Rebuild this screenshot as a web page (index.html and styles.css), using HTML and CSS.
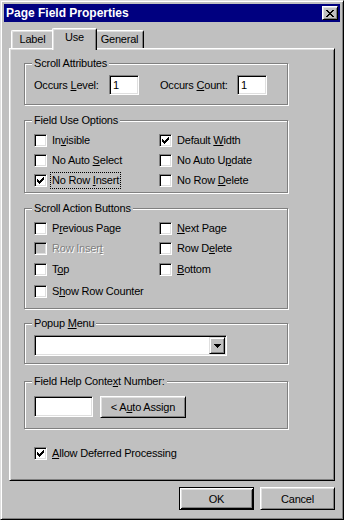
FILE: index.html
```html
<!DOCTYPE html>
<html lang="en">
<head>
    <meta charset="UTF-8">
    <meta name="viewport" content="width=device-width, initial-scale=1.0">
    <title>Page Field Properties</title>
    <link rel="stylesheet" href="styles.css">
</head>
<body>
    <div class="window">
        <!-- Title bar -->
        <div class="title-bar">
            <span class="title-text">Page Field Properties</span>
            <button class="close-btn" aria-label="Close">
                <svg width="8" height="7" viewBox="0 0 8 7" shape-rendering="crispEdges"><path fill="#000" d="M0 0h2v1h-2zM6 0h2v1h-2zM1 1h2v1h-2zM5 1h2v1h-2zM2 2h4v1h-4zM3 3h2v1h-2zM2 4h4v1h-4zM1 5h2v1h-2zM5 5h2v1h-2zM0 6h2v1h-2zM6 6h2v1h-2z"/></svg>
            </button>
        </div>

        <!-- Tabs -->
        <div class="tabs">
            <div class="tab tab-label">Label</div>
            <div class="tab tab-use active">Use</div>
            <div class="tab tab-general">General</div>
        </div>

        <!-- Tab page -->
        <div class="panel">
            <div class="group group-scroll">
                <div class="legend">Scroll Attributes</div>
                <div class="occurs-row">
                    <span class="occurs-label">Occurs <u>L</u>evel:</span>
                    <input class="text-input occurs-input" type="text" value="1" readonly>
                    <span class="occurs-label occurs-count">Occurs <u>C</u>ount:</span>
                    <input class="text-input occurs-input" type="text" value="1" readonly>
                </div>
            </div>

            <div class="group group-use">
                <div class="legend">Field Use Options</div>
                <div class="check-grid">
                    <div class="check-item"><span class="check"></span><span class="check-text">In<u>v</u>isible</span></div>
                    <div class="check-item"><span class="check checked"><svg width="7" height="7" viewBox="0 0 7 7" shape-rendering="crispEdges"><path d="M0 2v3h1v1h1v1h1v-1h1v-1h1v-1h1v-1h1V0h-1v1h-1v1h-1v1h-1v1h-1v-1h-1v-1z"/></svg></span><span class="check-text">Default <u>W</u>idth</span></div>
                    <div class="check-item"><span class="check"></span><span class="check-text">No Auto <u>S</u>elect</span></div>
                    <div class="check-item"><span class="check"></span><span class="check-text">No Auto U<u>p</u>date</span></div>
                    <div class="check-item"><span class="check checked"><svg width="7" height="7" viewBox="0 0 7 7" shape-rendering="crispEdges"><path d="M0 2v3h1v1h1v1h1v-1h1v-1h1v-1h1v-1h1V0h-1v1h-1v1h-1v1h-1v1h-1v-1h-1v-1z"/></svg></span><span class="check-text focus">No Row <u>I</u>nsert</span></div>
                    <div class="check-item"><span class="check"></span><span class="check-text">No Row <u>D</u>elete</span></div>
                </div>
            </div>

            <div class="group group-action">
                <div class="legend">Scroll Action Buttons</div>
                <div class="check-grid action-grid">
                    <div class="check-item"><span class="check"></span><span class="check-text">P<u>r</u>evious Page</span></div>
                    <div class="check-item"><span class="check"></span><span class="check-text"><u>N</u>ext Page</span></div>
                    <div class="check-item disabled"><span class="check"></span><span class="check-text">Row Inser<u>t</u></span></div>
                    <div class="check-item"><span class="check"></span><span class="check-text">Row D<u>e</u>lete</span></div>
                    <div class="check-item"><span class="check"></span><span class="check-text">T<u>o</u>p</span></div>
                    <div class="check-item"><span class="check"></span><span class="check-text"><u>B</u>ottom</span></div>
                    <div class="check-item"><span class="check"></span><span class="check-text">S<u>h</u>ow Row Counter</span></div>
                </div>
            </div>

            <div class="group group-popup">
                <div class="legend">Popup <u>M</u>enu</div>
                <div class="combo">
                    <span class="combo-btn">
                        <svg width="7" height="4" viewBox="0 0 7 4" shape-rendering="crispEdges"><path d="M0 0h7v1h-1v1h-1v1h-1v1h-1v-1h-1v-1h-1v-1h-1z"/></svg>
                    </span>
                </div>
            </div>

            <div class="group group-help">
                <div class="legend">Field Help Conte<u>x</u>t Number:</div>
                <div class="help-row">
                    <input class="text-input help-input" type="text" value="" readonly>
                    <button class="btn btn-assign">&lt; A<u>u</u>to Assign</button>
                </div>
            </div>

            <div class="check-item allow"><span class="check checked"><svg width="7" height="7" viewBox="0 0 7 7" shape-rendering="crispEdges"><path d="M0 2v3h1v1h1v1h1v-1h1v-1h1v-1h1v-1h1V0h-1v1h-1v1h-1v1h-1v1h-1v-1h-1v-1z"/></svg></span><span class="check-text"><u>A</u>llow Deferred Processing</span></div>
        </div>

        <!-- Dialog buttons -->
        <div class="footer">
            <button class="btn btn-default">OK</button>
            <button class="btn">Cancel</button>
        </div>
    </div>
</body>
</html>
```

FILE: styles.css
```css
/* Global */
body {
    margin: 0;
    background: #c0c0c0;
    font-family: "Liberation Sans", Arial, sans-serif;
    font-size: 11px;
    letter-spacing: -0.2px;
    color: #000;
}

u {
    text-decoration-thickness: 1px;
    text-underline-offset: 1px;
}

/* Window frame */
.window {
    box-sizing: border-box;
    width: 344px;
    height: 520px;
    padding: 3px;
    background: #c0c0c0;
    border: 1px solid;
    border-color: #dfdfdf #000 #000 #dfdfdf;
    box-shadow: inset 1px 1px #fff, inset -1px -1px #808080;
}

/* Title bar */
.title-bar {
    height: 18px;
    background: #000080;
    display: flex;
    align-items: center;
    justify-content: space-between;
    padding-left: 2px;
}

.title-text {
    color: #fff;
    font-weight: bold;
    font-size: 12px;
    letter-spacing: 0;
}

.close-btn {
    box-sizing: border-box;
    width: 16px;
    height: 14px;
    margin-right: 2px;
    padding: 0;
    background: #c0c0c0;
    border: 1px solid;
    border-color: #fff #000 #000 #fff;
    box-shadow: inset 1px 1px #dfdfdf, inset -1px -1px #808080;
    display: flex;
    justify-content: center;
    align-items: center;
}

/* Tabs */
.tabs {
    height: 26px;
    display: flex;
    align-items: flex-end;
    padding-left: 2px;
    margin: 0 5px;
}

.tab {
    box-sizing: border-box;
    height: 18px;
    padding-top: 2px;
    line-height: 13px;
    text-align: center;
    background: #c0c0c0;
    border: 1px solid;
    border-bottom: none;
    border-color: #fff #000 #000 #fff;
    border-radius: 2px 2px 0 0;
    box-shadow: inset 1px 1px #dfdfdf, inset -1px 0 #808080;
}

.tab-label { width: 43px; }
.tab-general { width: 49px; }

.tab.active {
    width: 45px;
    height: 22px;
    margin: 0 -2px -2px;
    z-index: 1;
}

/* Tab page */
.panel {
    box-sizing: border-box;
    height: 433px;
    margin: 0 5px;
    padding-top: 14px;
    border: 1px solid;
    border-color: #fff #000 #000 #fff;
    box-shadow: inset 1px 1px #dfdfdf, inset -1px -1px #808080;
}

/* Group boxes */
.group {
    box-sizing: border-box;
    width: 264px;
    margin: 15px 0 0 14px;
    padding-left: 9px;
    border: 1px solid #808080;
    box-shadow: inset 1px 1px #fff, 1px 1px #fff;
}

.group-scroll { margin-top: 0; height: 42px; }
.group-use { height: 73px; }
.group-action { height: 101px; }
.group-popup { margin-top: 14px; height: 41px; }
.group-help { margin-top: 17px; height: 48px; }

.legend {
    display: table;
    margin: -7px 0 0 -2px;
    padding: 0 2px;
    line-height: 13px;
    background: #c0c0c0;
}

/* Occurs row */
.occurs-row {
    display: flex;
    align-items: center;
    margin-top: 5px;
}

.occurs-label { width: 75px; }

.occurs-count {
    width: 77px;
    margin-left: 21px;
}

.text-input {
    box-sizing: border-box;
    height: 21px;
    margin: 0;
    padding: 0 3px;
    font-family: inherit;
    font-size: 11px;
    color: #000;
    background: #fff;
    border: 1px solid;
    border-color: #808080 #fff #fff #808080;
    box-shadow: inset 1px 1px #000, inset -1px -1px #dfdfdf;
    outline: none;
}

.occurs-input {
    width: 30px;
    height: 20px;
}

/* Checkboxes */
.check-grid {
    display: grid;
    grid-template-columns: 125px auto;
    grid-auto-rows: 13px;
    row-gap: 7px;
    margin-top: 7px;
}

.action-grid {
    grid-template-rows: 20px 21px 22px 13px;
    row-gap: 0;
    align-items: start;
}

.check-item {
    display: flex;
    align-items: center;
    height: 13px;
}

.check {
    box-sizing: border-box;
    width: 13px;
    height: 13px;
    flex-shrink: 0;
    background: #fff;
    border: 1px solid;
    border-color: #808080 #fff #fff #808080;
    box-shadow: inset 1px 1px #000, inset -1px -1px #dfdfdf;
    display: flex;
    justify-content: center;
    align-items: center;
}

.check-text {
    margin-left: 4px;
    padding: 0 1px;
    line-height: 15px;
    white-space: nowrap;
}

.check-text.focus {
    outline: 1px dotted #000;
}

.disabled .check {
    background: #c0c0c0;
}

.disabled .check-text {
    color: #808080;
    text-shadow: 1px 1px 0 #fff;
}

.allow {
    margin: 18px 0 0 24px;
}

/* Combo box */
.combo {
    box-sizing: border-box;
    width: 193px;
    height: 21px;
    margin-top: 5px;
    padding: 1px;
    background: #fff;
    border: 1px solid;
    border-color: #808080 #fff #fff #808080;
    box-shadow: inset 1px 1px #000, inset -1px -1px #dfdfdf;
    display: flex;
    justify-content: flex-end;
}

.combo-btn {
    box-sizing: border-box;
    width: 16px;
    height: 17px;
    background: #c0c0c0;
    border: 1px solid;
    border-color: #dfdfdf #000 #000 #dfdfdf;
    box-shadow: inset 1px 1px #fff, inset -1px -1px #808080;
    display: flex;
    justify-content: center;
    align-items: center;
}

/* Help row */
.help-row {
    display: flex;
    align-items: flex-start;
    margin-top: 8px;
}

.help-input { width: 59px; }

/* Buttons */
.btn {
    box-sizing: border-box;
    height: 23px;
    padding: 0;
    font-family: inherit;
    font-size: 11px;
    letter-spacing: -0.2px;
    color: #000;
    background: #c0c0c0;
    border: 1px solid;
    border-color: #fff #000 #000 #fff;
    box-shadow: inset 1px 1px #dfdfdf, inset -1px -1px #808080;
}

.btn-assign {
    width: 86px;
    height: 22px;
    margin-left: 7px;
}

.btn-default {
    border-color: #000;
    box-shadow: inset 1px 1px #fff, inset -1px -1px #000, inset 2px 2px #dfdfdf, inset -2px -2px #808080;
}

/* Footer */
.footer {
    display: flex;
    justify-content: flex-end;
    gap: 6px;
    margin-top: 6px;
    padding-right: 5px;
}

.footer .btn { width: 75px; }
```
